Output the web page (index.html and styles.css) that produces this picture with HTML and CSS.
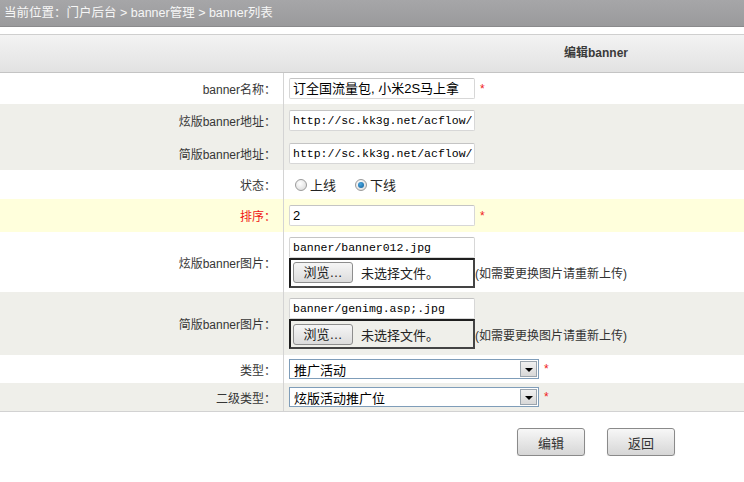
FILE: index.html
```html
<!DOCTYPE html>
<html lang="zh-CN">
<head>
<meta charset="utf-8">
<title>编辑banner</title>
<link rel="stylesheet" href="styles.css">
</head>
<body>
<div class="crumb">当前位置：门户后台 &gt; banner管理 &gt; banner列表</div>
<div class="panel">
  <div class="panel-head">编辑banner</div>
  <div class="form">
    <div class="row h31">
      <div class="label">banner名称：</div>
      <div class="field"><div class="input cjk">订全国流量包, 小米2S马上拿</div><span class="req">*</span></div>
    </div>
    <div class="row h33 gray">
      <div class="label">炫版banner地址：</div>
      <div class="field"><div class="input mono">http://sc.kk3g.net/acflow/</div></div>
    </div>
    <div class="row h33 gray">
      <div class="label">简版banner地址：</div>
      <div class="field"><div class="input mono">http://sc.kk3g.net/acflow/</div></div>
    </div>
    <div class="row h29">
      <div class="label">状态：</div>
      <div class="field radios">
        <span class="radio"></span><span class="rtext">上线</span>
        <span class="radio on"></span><span class="rtext">下线</span>
      </div>
    </div>
    <div class="row h33 yellow">
      <div class="label red">排序：</div>
      <div class="field"><div class="input cjk">2</div><span class="req">*</span></div>
    </div>
    <div class="row h60">
      <div class="label">炫版banner图片：</div>
      <div class="field stack">
        <div class="input mono">banner/banner012.jpg</div>
        <div class="fileline">
          <div class="file"><span class="browse">浏览…</span><span class="nofile">未选择文件。</span></div>
          <span class="hint">(如需要更换图片请重新上传)</span>
        </div>
      </div>
    </div>
    <div class="row h63 gray">
      <div class="label">简版banner图片：</div>
      <div class="field stack">
        <div class="input mono">banner/genimg.asp;.jpg</div>
        <div class="fileline">
          <div class="file"><span class="browse">浏览…</span><span class="nofile">未选择文件。</span></div>
          <span class="hint">(如需要更换图片请重新上传)</span>
        </div>
      </div>
    </div>
    <div class="row h28">
      <div class="label">类型：</div>
      <div class="field"><div class="select"><span class="sel-text">推广活动</span><span class="sel-btn"><i class="tri"></i></span></div><span class="req">*</span></div>
    </div>
    <div class="row h28 gray last">
      <div class="label">二级类型：</div>
      <div class="field"><div class="select"><span class="sel-text">炫版活动推广位</span><span class="sel-btn"><i class="tri"></i></span></div><span class="req">*</span></div>
    </div>
  </div>
  <div class="actions">
    <button class="btn">编辑</button>
    <button class="btn">返回</button>
  </div>
</div>
</body>
</html>
```

FILE: styles.css
```css
html, body {
  margin: 0;
  padding: 0;
  background: #fff;
  font-family: "Liberation Sans", "Noto Sans CJK SC", sans-serif;
  font-size: 12px;
  color: #363636;
}

.crumb {
  height: 26px;
  line-height: 26px;
  padding-left: 4px;
  color: #f6f6f6;
  font-size: 12.5px;
  background: linear-gradient(#a6a6a8, #9a9a9c);
  border-bottom: 1px solid #8a8a8c;
}

.panel {
  margin-top: 7px;
}

.panel-head {
  height: 37px;
  line-height: 37px;
  padding-left: 564px;
  font-weight: bold;
  color: #3a3a3a;
  background: linear-gradient(#f3f3f3, #e2e2e2);
  border-top: 1px solid #cfcfcf;
  border-bottom: 1px solid #c4c4c4;
}

.form {
  border-bottom: 1px solid #d2d2d2;
}

.row {
  display: grid;
  grid-template-columns: 283px 1fr;
}
.row.gray { background: #efefea; }
.row.yellow { background: #ffffdc; }

.h28 { height: 28px; }
.h29 { height: 29px; }
.h31 { height: 31px; }
.h33 { height: 33px; }
.h60 { height: 60px; }
.h63 { height: 63px; }

.label {
  display: flex;
  align-items: center;
  justify-content: flex-end;
  padding-right: 7px;
  border-right: 1px solid #d4d4d4;
  box-sizing: border-box;
  width: 284px;
}
.label.red { color: #f01414; }

.field {
  display: flex;
  align-items: center;
  padding-left: 6px;
}
.field.stack {
  flex-direction: column;
  align-items: flex-start;
  justify-content: center;
}

.input {
  box-sizing: border-box;
  width: 186px;
  height: 21px;
  line-height: 19px;
  padding: 0 3px;
  background: #fff;
  border: 1px solid #d7d7d7;
  border-top-color: #c4c4c4;
  border-radius: 2px;
  white-space: nowrap;
  overflow: hidden;
  color: #000;
}
.input.cjk { font-size: 13px; }
.input.mono {
  font-family: "Liberation Mono", monospace;
  font-size: 11.5px;
}

.req {
  color: #f02020;
  margin-left: 5px;
  font-size: 12px;
  align-self: center;
}

.radio {
  box-sizing: border-box;
  width: 12px;
  height: 12px;
  border-radius: 50%;
  border: 1px solid #9a9a9a;
  background: radial-gradient(circle at 40% 35%, #ffffff, #d6d6d6);
  margin-right: 3px;
  position: relative;
}
.radio.on::after {
  content: "";
  position: absolute;
  left: 2px;
  top: 2px;
  width: 6px;
  height: 6px;
  border-radius: 50%;
  background: radial-gradient(circle at 40% 35%, #4aa7e0, #0e5c98);
}
.radio:first-child { margin-left: 6px; }
.rtext {
  font-size: 13px;
  color: #222;
  margin-right: 19px;
}

.fileline {
  display: flex;
  align-items: center;
}
.file {
  box-sizing: border-box;
  width: 186px;
  height: 30px;
  border: 2px solid #1e1e1e;
  border-right-color: #444;
  border-bottom-color: #444;
  display: flex;
  align-items: center;
  padding-left: 2px;
}
.browse {
  box-sizing: border-box;
  width: 60px;
  height: 21px;
  line-height: 19px;
  text-align: center;
  font-size: 13px;
  color: #222;
  border: 1px solid #8e8e8e;
  border-radius: 3px;
  background: linear-gradient(#f6f6f6, #dcdcdc);
}
.nofile {
  margin-left: 8px;
  font-size: 13px;
  color: #222;
}
.hint {
  font-size: 12px;
  color: #333;
}

.select {
  box-sizing: border-box;
  width: 250px;
  height: 20px;
  border: 1px solid #7f9db9;
  background: #fff;
  display: flex;
  align-items: center;
  justify-content: space-between;
}
.sel-text {
  padding-left: 4px;
  font-size: 13px;
  color: #000;
}
.sel-btn {
  box-sizing: border-box;
  width: 17px;
  height: 16px;
  margin-right: 1px;
  background: linear-gradient(#f0f0f0, #d8d8d8);
  border: 1px solid #9aa4ad;
  display: flex;
  align-items: center;
  justify-content: center;
}
.tri {
  width: 0;
  height: 0;
  border-left: 4px solid transparent;
  border-right: 4px solid transparent;
  border-top: 4px solid #000;
  margin-top: 2px;
}

.actions {
  display: flex;
  gap: 22px;
  padding: 16px 0 0 517px;
}
.btn {
  box-sizing: border-box;
  width: 68px;
  height: 28px;
  font-family: "Liberation Sans", "Noto Sans CJK SC", sans-serif;
  font-size: 13px;
  color: #333;
  border: 1px solid #8a8a8a;
  border-radius: 3px;
  background: linear-gradient(#f7f7f7, #d6d6d6);
  box-shadow: 0 1px 1px rgba(0,0,0,0.15);
  padding: 0;
}
```
